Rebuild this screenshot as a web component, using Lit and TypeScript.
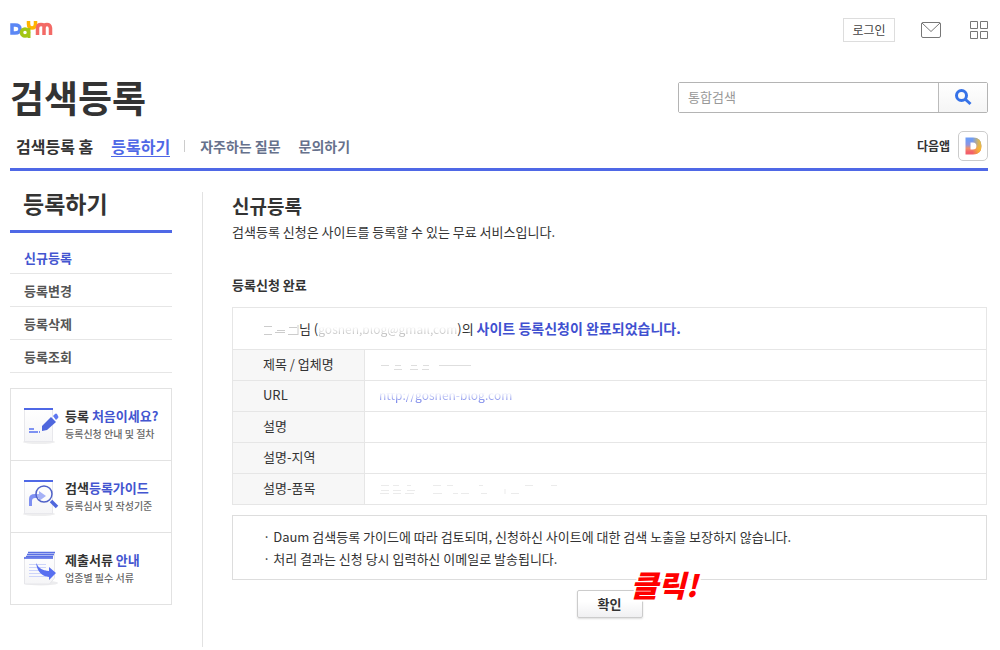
import { LitElement, html, css, svg, nothing } from "lit";
import { customElement } from "lit/decorators.js";

const sheet = svg`
  <ellipse cx="16" cy="36" rx="16" ry="2" fill="#eeeeef"></ellipse>
  <rect x="1.500" y="2.500" width="28" height="33" fill="url(#paper)" stroke="#e8e8ec"></rect>
  <rect x="1" y="2" width="29" height="2" fill="#4f68e6"></rect>`;

const guideIcons = {
  write: svg`${sheet}
    <path d="M6 23h5M6 26h9M16 26h1" stroke="#5570f0" stroke-width="1.500"></path>
    <path d="M19 20l9-9 5 5-9 8-5 1z" fill="#4f67dd"></path>
    <path d="M30 10l2-2q1-1 2 0l1 2q1 1 0 2l-2 2z" fill="#5f78f0"></path>`,
  guide: svg`${sheet}
    <path d="M6 28V21q0-5 6-5h4v-3l7 5-7 5v-3h-4q-3 0-3 3v5z" fill="#7f90f2"></path>
    <circle cx="21" cy="16" r="8" fill="#ffffff" fill-opacity=".3" stroke="#5062c8" stroke-width="1.500"></circle>
    <path d="M28 23l6 6" stroke="#4f67dd" stroke-width="3.500"></path>`,
  papers: svg`
    <ellipse cx="18" cy="33" rx="17" ry="2.500" fill="#ececee"></ellipse>
    <path d="M1.500 7h28l2-4v25l-5 6h-25z" fill="url(#paper)" stroke="#e6e6ea"></path>
    <path d="M5 2.500h27M4 4.500h27M3 6.500h27" stroke="#5a70e4" stroke-width="1.500"></path>
    <path d="M1 8h29" stroke="#4860e4" stroke-width="1.500"></path>
    <path d="M6 14.500h17M6 17.500h17M6 20.500h17M6 23.500h17M6 26.500h17" stroke="#cdd4fa"></path>
    <path d="M13 13q4 8 13 8v-4l7 6-7 7v-3q-11-1-13-14z" fill="#586ff0"></path>`,
};

const defs = svg`<defs><linearGradient id="paper" x1="0" y1="0" x2="0" y2="1">
  <stop offset="0" stop-color="#ffffff"></stop><stop offset="1" stop-color="#f5f5f7"></stop>
</linearGradient></defs>`;

const sideItems = ["신규등록", "등록변경", "등록삭제", "등록조회"];

const guides = [
  { icon: guideIcons.write, lead: "등록 ", accent: "처음이세요?", sub: "등록신청 안내 및 절차" },
  { icon: guideIcons.guide, lead: "검색", accent: "등록가이드", sub: "등록심사 및 작성기준" },
  { icon: guideIcons.papers, lead: "제출서류 ", accent: "안내", sub: "업종별 필수 서류" },
];

const smudge = (width: number, d: string, color: string) => html`
  <svg class="smudge" width=${width} height="12" aria-hidden="true">
    <path d=${d} stroke=${color} fill="none"></path>
  </svg>`;

const rows = [
  { label: "제목 / 업체명", value: smudge(94, "M2 6.500h8M16 6.500h6M32 6.500h6M44 6.500h6M60 6.500h32M15 10.500h8M31 10.500h8M43 10.500h7", "#dedede") },
  { label: "URL", value: html`<a class="faded link" href="#">http://goshen-blog.com</a>` },
  { label: "설명", value: nothing },
  { label: "설명-지역", value: nothing },
  { label: "설명-품목", value: smudge(180, "M2 2.500h8M14 2.500h6M28 2.500h4M54 2.500h8M68 2.500h6M100 2.500h4M146 2.500h8M172 2.500h6M2 7.500h8M14 7.500h8M28 7.500h8M1 10.500h9M14 10.500h8M26 10.500h9M54 10.500h9M74 10.500h5M82 10.500h8M102 10.500h6M126 6v5M132 10.500h8", "#ebebeb") },
];

@customElement("app-root")
export class AppRoot extends LitElement {
  static styles = css`
    :host {
      display: block;
      padding: 0 12px 0 10px;
      background: #fff;
      color: #333;
      font: 13px/20px "Noto Sans CJK KR", "Noto Sans", sans-serif;
    }
    * { box-sizing: border-box; }
    a { color: inherit; text-decoration: none; }
    h1, h2, h3, p, ul { margin: 0; padding: 0; }
    ul { list-style: none; }
    button, input { font: inherit; color: inherit; margin: 0; border-radius: 0; }
    svg { display: block; flex: none; }
    .top { display: flex; align-items: center; justify-content: space-between; padding-top: 18px; }
    .tools { display: flex; align-items: center; }
    .login {
      width: 52px; height: 24px; padding: 0; border: 1px solid #ddd;
      background: #fff; font-size: 12px; line-height: 20px; color: #444;
    }
    .mail { margin-left: 26px; }
    .apps { margin-left: 29px; }
    .brand { display: flex; justify-content: space-between; align-items: center; height: 56px; margin-top: 27px; }
    .brand h1 { font-size: 37px; line-height: 56px; font-weight: 700; }
    .search { display: flex; width: 310px; height: 31px; border: 1px solid #b4b4b4; border-radius: 2px; }
    .search input {
      flex: 1; min-width: 0; border: 0; padding: 0 9px; background: #fff; outline: 0;
    }
    .search input::placeholder { color: #999; opacity: 1; }
    .search button {
      display: grid; place-items: center; width: 49px; padding: 0;
      border: 0; border-left: 1px solid #bbb; background: linear-gradient(#fff, #f5f5f5);
    }
    .nav {
      display: flex; align-items: center; height: 46px; padding: 0 0 1px 6px;
      border-bottom: 3px solid #4f68e6; font-weight: 700;
    }
    .nav a { font-size: 14px; line-height: 20px; color: #66718c; margin-right: 18px; white-space: nowrap; }
    .nav .main { font-size: 16px; color: #333; }
    .nav .on { color: #4f68e6; border-bottom: 1px solid #4f68e6; margin-right: 14px; }
    .bar { width: 1px; height: 12px; background: #ccc; margin-right: 15px; }
    .nav .app { display: flex; align-items: center; gap: 8px; margin: 0 0 0 auto; font-size: 12px; color: #333; }
    .badge { border: 1px solid #ccc; border-radius: 5px; }
    .body { display: flex; gap: 30px; }
    .side { flex: 0 0 162px; }
    .side h2 {
      height: 62px; padding: 15px 13px 0; font-size: 23px; line-height: 34px; font-weight: 700;
      border-bottom: 3px solid #4f68e6;
    }
    .menu { padding-top: 8px; }
    .menu a {
      display: block; height: 33px; padding: 5px 14px 0; border-bottom: 1px solid #e6e6e6;
      font-weight: 700; line-height: 24px; color: #555;
    }
    .menu .on { color: #4355d0; }
    .guides { margin-top: 15px; border: 1px solid #e2e2e2; }
    .guides a { display: flex; align-items: center; gap: 4px; height: 71px; padding-left: 12px; white-space: nowrap; }
    .guides li + li { border-top: 1px solid #e2e2e2; }
    .guide { font-weight: 700; line-height: 18px; }
    .accent { color: #4355d0; }
    .sub { display: block; font-size: 10px; font-weight: 500; color: #666; }
    .content { flex: 1; min-width: 0; margin-top: 21px; padding: 0 2px 29px 29px; border-left: 1px solid #e2e2e2; }
    .content { padding-right: 1px; }
    .content h2 { font-size: 19px; line-height: 28px; font-weight: 700; }
    .content h3 { font-size: 13px; line-height: 20px; font-weight: 700; margin: 31px 0 12px; }
    .intro { line-height: 24px; }
    table { width: 100%; border-collapse: collapse; border: 1px solid #ddd; }
    th, td { height: 31px; padding: 0 14px 2px; border: 1px solid #e6e6e6; text-align: left; font-weight: 400; }
    th { width: 132px; padding-left: 30px; padding-right: 0; background: #f7f7f7; }
    .done { height: 42px; padding: 0 30px; }
    .done strong { font-size: 14px; font-weight: 700; color: #4050d0; }
    .smudge { display: inline-block; vertical-align: middle; }
    .faded {
      font-size: 12px; color: transparent; background: linear-gradient(transparent 40%, #c0c0c0 85%);
      -webkit-background-clip: text; background-clip: text;
    }
    .link { background-image: linear-gradient(transparent 40%, #7280e8 90%); }
    .notice { margin-top: 10px; border: 1px solid #ddd; padding: 10px 30px 9px; line-height: 22px; }
    .actions { display: flex; justify-content: center; margin-top: 10px; }
    .confirm { position: relative; }
    .confirm button {
      display: block; width: 66px; height: 28px; padding: 0; border: 1px solid #ccc; border-radius: 2px;
      background: linear-gradient(#fff 40%, #f0f0f2); box-shadow: 0 1px 2px #ddd;
      font-weight: 700; line-height: 24px;
    }
    .click {
      position: absolute; left: 54px; top: -28px;
      font-size: 30px; line-height: 44px; font-weight: 900; font-style: italic; color: #f00; white-space: nowrap;
      -webkit-text-stroke: 4px #fff; paint-order: stroke fill; pointer-events: none;
    }
  `;

  render() {
    return html`
      <header>
        <div class="top">
          <a href="#" aria-label="Daum">
            <svg width="44" height="20" viewBox="0 0 44 20" fill="none" stroke-width="4">
              <path d="M2 5h3q5 0 5 4t-5 4H2z" stroke="#5b87f5" stroke-width="3.500"></path>
              <path d="M18.500 1V4q0 4 3.500 4t3.500-4V1" stroke="#ffb400" stroke-width="3.500"></path>
              <circle cx="15" cy="12.500" r="3.500" stroke="#a3c614" stroke-width="3.500"></circle>
              <path d="M19 8V18" stroke="#a3c614" stroke-width="3"></path>
              <path d="M27.500 15V8q0-3.500 3.500-3.500t3 3.500v7M34 8q0-3.500 3-3.500t3.500 3.500v7" stroke="#f36a66" stroke-width="3.500"></path>
            </svg>
          </a>
          <div class="tools">
            <button class="login">로그인</button>
            <a class="mail" href="#" aria-label="메일">
              <svg width="20" height="16" fill="none" stroke="#777">
                <rect x=".5" y=".5" width="19" height="15" rx="1.500"></rect>
                <path d="M1 1l9 8.500L19 1"></path>
              </svg>
            </a>
            <a class="apps" href="#" aria-label="전체 서비스">
              <svg width="18" height="18" fill="none" stroke="#777">
                <path d="M.5.5h7v7h-7zM10.500.5h7v7h-7zM.5 10.500h7v7h-7zM10.500 10.500h7v7h-7z"></path>
              </svg>
            </a>
          </div>
        </div>
        <div class="brand">
          <h1>검색등록</h1>
          <form class="search" @submit=${(e: Event) => e.preventDefault()}>
            <input type="search" placeholder="통합검색" aria-label="통합검색" />
            <button aria-label="검색">
              <svg width="18" height="18" fill="none" stroke="#3672e8" stroke-width="3">
                <circle cx="7.500" cy="7.500" r="5"></circle>
                <path d="M11 11l5.500 5"></path>
              </svg>
            </button>
          </form>
        </div>
        <nav class="nav">
          <a class="main" href="#">검색등록 홈</a>
          <a class="main on" href="#">등록하기</a>
          <span class="bar"></span>
          <a href="#">자주하는 질문</a>
          <a href="#">문의하기</a>
          <a class="app" href="#">다음앱
            <svg class="badge" width="30" height="30" viewBox="0 0 28 28">
              <defs><linearGradient id="rainbow" x1="0" y1="0" x2="0" y2="1">
                <stop offset="0" stop-color="#6f9cf5"></stop><stop offset=".4" stop-color="#8f94e0"></stop>
                <stop offset=".7" stop-color="#f0906a"></stop><stop offset="1" stop-color="#f2606a"></stop>
              </linearGradient>
              <linearGradient id="glow" x1="0" y1="0" x2="1" y2="0">
                <stop offset=".4" stop-color="#f5c02a" stop-opacity="0"></stop><stop offset="1" stop-color="#f5c02a" stop-opacity=".8"></stop>
              </linearGradient></defs>
              <path d="M9 8h5q6 0 6 6t-6 6H9z" fill="none" stroke="url(#rainbow)" stroke-width="5"></path>
              <path d="M9 8h5q6 0 6 6t-6 6H9z" fill="none" stroke="url(#glow)" stroke-width="5"></path>
            </svg>
          </a>
        </nav>
      </header>
      <div class="body">
        <aside class="side">
          <h2>등록하기</h2>
          <ul class="menu">
            ${sideItems.map((t, i) => html`<li><a class=${i ? "" : "on"} href="#">${t}</a></li>`)}
          </ul>
          <ul class="guides">
            ${guides.map((g) => html`<li><a href="#">
              <svg width="38" height="38" viewBox="0 0 38 38">${defs}${g.icon}</svg>
              <span class="guide">${g.lead}<span class="accent">${g.accent}</span><span class="sub">${g.sub}</span></span>
            </a></li>`)}
          </ul>
        </aside>
        <main class="content">
          <h2>신규등록</h2>
          <p class="intro">검색등록 신청은 사이트를 등록할 수 있는 무료 서비스입니다.</p>
          <h3>등록신청 완료</h3>
          <table>
            <tr><td class="done" colspan="2">${smudge(36, "M1 2.500h8M14 6.500h8M26 3.500h8M1 10.500h8M12 8.500h10M25 10.500h10M35 1v10", "#cccccc")}님 (<span class="faded">goshen,blog@gmail,com</span>)의 <strong>사이트 등록신청이 완료되었습니다.</strong></td></tr>
            ${rows.map((r) => html`<tr><th scope="row">${r.label}</th><td>${r.value}</td></tr>`)}
          </table>
          <ul class="notice">
            <li>· Daum 검색등록 가이드에 따라 검토되며, 신청하신 사이트에 대한 검색 노출을 보장하지 않습니다.</li>
            <li>· 처리 결과는 신청 당시 입력하신 이메일로 발송됩니다.</li>
          </ul>
          <div class="actions">
            <div class="confirm"><button>확인</button><span class="click">클릭!</span></div>
          </div>
        </main>
      </div>
    `;
  }
}
